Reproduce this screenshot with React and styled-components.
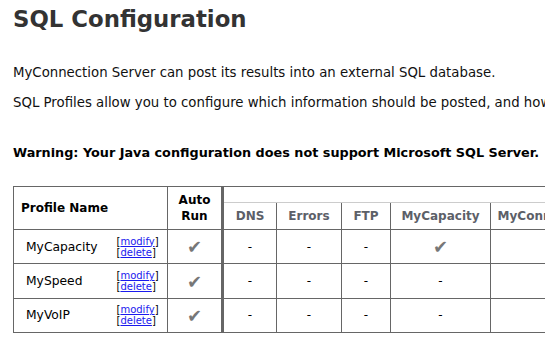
import React from 'react';
import styled, { createGlobalStyle } from 'styled-components';

const GlobalStyle = createGlobalStyle`
  html, body {
    margin: 0;
    padding: 0;
    background: #fff;
    overflow: hidden;
  }
  body {
    font-family: "DejaVu Sans", Verdana, sans-serif;
    color: #000;
  }
`;

const Page = styled.div`
  padding: 5px 13px 0 13px;
  width: 900px;
`;

const Title = styled.h1`
  margin: 0;
  font-size: 22.8px;
  font-weight: bold;
  color: #333;
  line-height: 28px;
`;

const Para = styled.p`
  margin: ${(p) => p.$top}px 0 0 0;
  font-size: 13.3px;
  line-height: 16px;
  white-space: nowrap;
  color: #111;
`;

const Warning = styled(Para)`
  font-size: 12.8px;
  font-weight: bold;
  color: #000;
`;

const Table = styled.table`
  margin-top: 25px;
  border-collapse: collapse;
  table-layout: fixed;
  font-size: 12px;
  border: 1px solid #666;
`;

const HeadCell = styled.th`
  border: 1px solid #666;
  text-align: ${(p) => (p.$left ? 'left' : 'center')};
  padding: ${(p) => (p.$left ? '0 7px' : '0')};
  font-weight: bold;
  color: #000;
  line-height: 16px;
`;

const GroupCell = styled.th`
  height: 15px;
  border-top: 1px solid #666;
  border-bottom: 1px solid #ccc;
  border-left: 3px solid #666;
  padding: 0;
`;

const SubHead = styled.th`
  height: 26px;
  border: 1px solid #666;
  border-top: 1px solid #ccc;
  border-left: ${(p) => (p.$first ? '3px' : '1px')} solid #666;
  color: #5c6068;
  font-weight: bold;
  padding: 0;
  white-space: nowrap;
  overflow: hidden;
`;

const Row = styled.tr`
  height: 34.4px;
`;

const NameCell = styled.td`
  border-top: 1px solid #666;
  border-bottom: 1px solid #666;
  padding: 0 0 0 12px;
  font-size: 12.3px;
`;

const LinkCell = styled.td`
  border-top: 1px solid #666;
  border-bottom: 1px solid #666;
  border-right: 1px solid #666;
  padding: 0 0 0 7px;
  font-size: 10px;
  line-height: 11px;
`;

const Cell = styled.td`
  border: 1px solid #666;
  border-left: ${(p) => (p.$first ? '3px' : '1px')} solid #666;
  text-align: center;
  padding: 0;
  font-size: 12px;
`;

const Check = styled.span`
  color: #777;
  font-size: 18px;
`;

const Link = styled.a`
  color: #1a1aee;
  text-decoration: underline;
`;

const columns = ['DNS', 'Errors', 'FTP', 'MyCapacity', 'MyConnection'];

const profiles = [
  { name: 'MyCapacity', values: ['-', '-', '-', true, ''] },
  { name: 'MySpeed', values: ['-', '-', '-', '-', ''] },
  { name: 'MyVoIP', values: ['-', '-', '-', '-', ''] },
];

export default function App() {
  return (
    <>
      <GlobalStyle />
      <Page>
        <Title>SQL Configuration</Title>
        <Para $top={32}>
          MyConnection Server can post its results into an external SQL database.
        </Para>
        <Para $top={14}>
          SQL Profiles allow you to configure which information should be posted, and how it should be stored.
        </Para>
        <Warning $top={34}>
          Warning: Your Java configuration does not support Microsoft SQL Server.
        </Warning>
        <Table>
          <colgroup>
            <col style={{ width: 96 }} />
            <col style={{ width: 58 }} />
            <col style={{ width: 55 }} />
            <col style={{ width: 54 }} />
            <col style={{ width: 65 }} />
            <col style={{ width: 49 }} />
            <col style={{ width: 100 }} />
            <col style={{ width: 110 }} />
          </colgroup>
          <thead>
            <tr>
              <HeadCell colSpan={2} rowSpan={2} $left>Profile Name</HeadCell>
              <HeadCell rowSpan={2}>Auto<br />Run</HeadCell>
              <GroupCell colSpan={5} />
            </tr>
            <tr>
              {columns.map((c, i) => (
                <SubHead key={c} $first={i === 0}>{c}</SubHead>
              ))}
            </tr>
          </thead>
          <tbody>
            {profiles.map((p) => (
              <Row key={p.name}>
                <NameCell>{p.name}</NameCell>
                <LinkCell>
                  [<Link href="#">modify</Link>]<br />
                  [<Link href="#">delete</Link>]
                </LinkCell>
                <Cell><Check>✔</Check></Cell>
                {p.values.map((v, i) => (
                  <Cell key={i} $first={i === 0}>
                    {v === true ? <Check>✔</Check> : v}
                  </Cell>
                ))}
              </Row>
            ))}
          </tbody>
        </Table>
      </Page>
    </>
  );
}
